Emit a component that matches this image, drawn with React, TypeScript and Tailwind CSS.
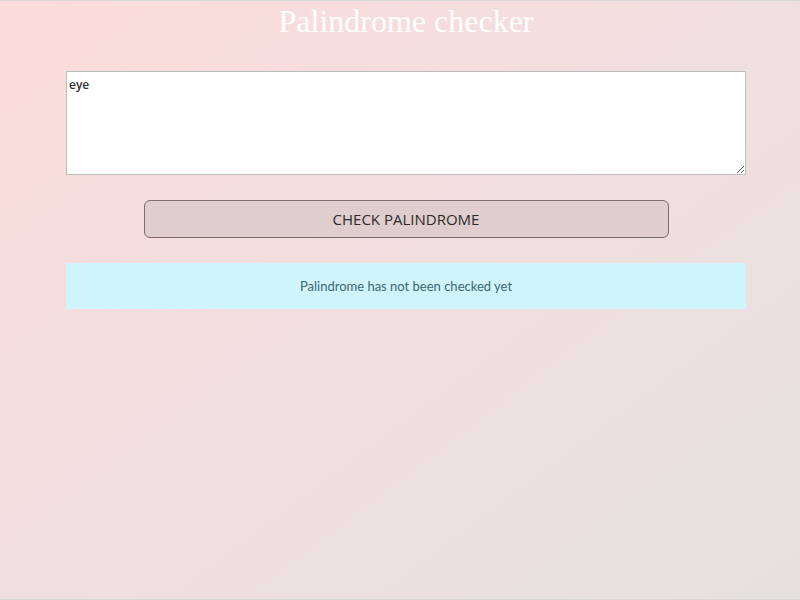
import { useState } from "react";

export default function App() {
  const [text, setText] = useState("eye");
  const [result, setResult] = useState("Palindrome has not been checked yet");

  function checkPalindrome() {
    const clean = text.toLowerCase().replace(/[^a-z0-9]/g, "");
    const reversed = clean.split("").reverse().join("");
    setResult(clean === reversed ? "It is a palindrome" : "It is not a palindrome");
  }

  return (
    <div className="h-[600px] w-full border-y border-[#d6d6d6] bg-gradient-to-br from-[#fcdcdc] to-[#e5e1e1] pl-[12px] font-['Open_Sans',sans-serif]">
      <h1 className="text-center font-['Liberation_Serif',serif] text-[32px] leading-[40px] text-white">
        Palindrome checker
      </h1>
      <div className="mx-auto mt-[30px] flex w-[680px] flex-col items-center">
        <textarea
          value={text}
          onChange={(e) => setText(e.target.value)}
          className="h-[104px] w-full border border-[#bdbdbd] bg-white px-[2px] py-[5px] text-[12px] font-semibold leading-[16px] text-[#333] outline-none"
        />
        <button
          onClick={checkPalindrome}
          className="mt-[25px] h-[38px] w-[525px] rounded-[6px] border border-[#7d6e6e] bg-[#e0cdcd] text-[15px] text-[#2b2b2b]"
        >
          CHECK PALINDROME
        </button>
        <div className="mt-[25px] flex h-[46px] w-full items-center justify-center bg-[#cff4fc] pt-[2px] font-['Lato',sans-serif] text-[13px] text-[#3a6670]">
          {result}
        </div>
      </div>
    </div>
  );
}
